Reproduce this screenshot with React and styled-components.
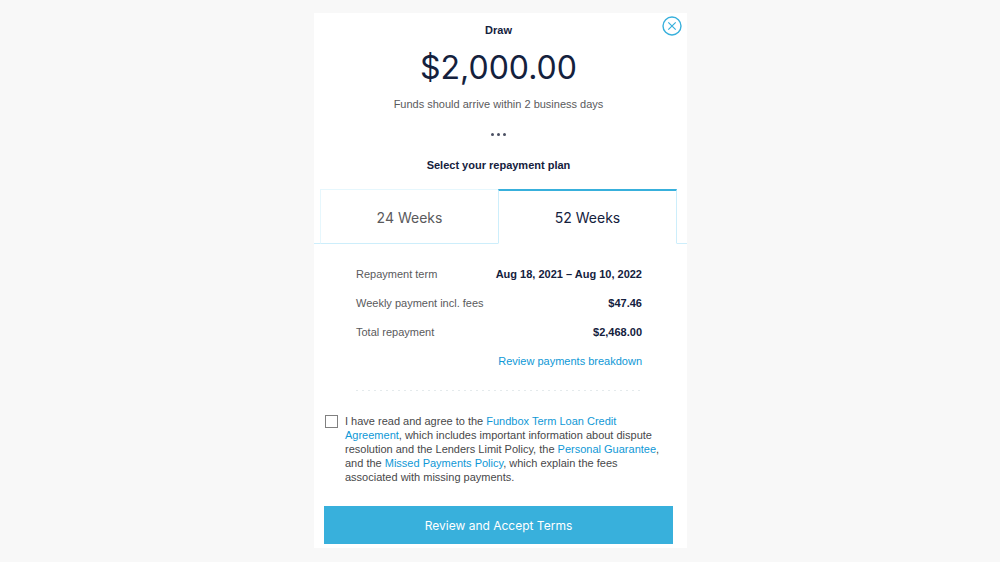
import React, { useState } from "react";
import styled, { createGlobalStyle } from "styled-components";

const color = {
  page: "#f8f8f8",
  navy: "#14213d",
  text: "#5a5a5c",
  darkText: "#48484a",
  link: "#0f98d6",
  accent: "#38b0dc",
  line: "#cdeefb",
  faintLine: "#e6f7fd",
};

const displayFont = `Inter, "Liberation Sans", sans-serif`;

const GlobalStyle = createGlobalStyle`
  *, *::before, *::after { box-sizing: border-box; }
  body {
    margin: 0;
    background: ${color.page};
    color: ${color.text};
    font-family: "Liberation Sans", Arial, sans-serif;
    font-size: 11px;
    line-height: 14px;
  }
  button { font-family: ${displayFont}; cursor: pointer; }
`;

const Page = styled.main`
  display: flex;
  justify-content: center;
  padding: 13px 13px 14px 14px;
`;

const Card = styled.section`
  position: relative;
  width: 100%;
  max-width: 373px;
  background: #fff;
  padding-bottom: 4px;
`;

const CloseButton = styled.button`
  position: absolute;
  top: 3px;
  right: 5px;
  width: 20px;
  height: 20px;
  padding: 0;
  border: 0;
  background: none;
  color: ${color.accent};

  svg { display: block; }
`;

const Header = styled.header`
  display: flex;
  flex-direction: column;
  align-items: center;
  padding: 10px 14px 0 10px;
  text-align: center;
`;

const Heading = styled.h2`
  margin: 0;
  font-size: 11px;
  line-height: 14px;
  font-weight: 700;
  color: ${color.navy};
`;

const Amount = styled.p`
  margin: 10px 0 8px;
  font-family: ${displayFont};
  font-size: 32px;
  line-height: 42px;
  color: ${color.navy};
`;

const Note = styled.p`
  margin: 0;
  color: ${color.text};
`;

const Dots = styled.div`
  display: flex;
  gap: 3px;
  margin: 22px 0;

  span {
    width: 3px;
    height: 3px;
    border-radius: 50%;
    background: #4b5063;
  }
`;

const Tabs = styled.div`
  display: flex;
  margin-top: 17px;

  &::before,
  &::after {
    content: "";
    border-bottom: 1px solid ${color.line};
  }
  &::before { width: 6px; }
  &::after { width: 10px; }
`;

const Tab = styled.button`
  flex: 1;
  height: 55px;
  padding: 2px 0 0;
  font-size: 14px;
  line-height: 18px;
  background: #fff;
  color: ${(p) => (p.$active ? color.navy : color.text)};
  border: 1px solid ${(p) => (p.$active ? color.line : color.faintLine)};
  border-top: ${(p) => (p.$active ? `2px solid ${color.accent}` : `1px solid ${color.faintLine}`)};
  border-right-width: ${(p) => (p.$active ? "1px" : "0")};
  border-bottom-color: ${(p) => (p.$active ? "#fff" : color.line)};
`;

const Details = styled.div`
  margin: 0 45px 0 42px;
  padding: 23px 0 22px;
`;

const DottedRule = styled.hr`
  height: 1px;
  margin: 0 45px 0 42px;
  border: 0;
  background: repeating-linear-gradient(to right, #e4eaec 0 2px, #fff 2px 6px);
`;

const Terms = styled.dl`
  display: flex;
  flex-direction: column;
  gap: 15px;
  margin: 0 0 15px;
`;

const TermRow = styled.div`
  display: flex;
  justify-content: space-between;

  dt, dd { margin: 0; }
  dd {
    font-weight: 700;
    color: ${color.navy};
  }
`;

const LinkLine = styled.div`
  text-align: right;
`;

const Link = styled.a`
  color: ${color.link};
  text-decoration: none;
`;

const Consent = styled.div`
  display: flex;
  align-items: flex-start;
  gap: 7px;
  margin: 23px 18px 0 11px;
  color: ${color.darkText};
`;

const Checkbox = styled.input`
  flex: none;
  appearance: none;
  width: 13px;
  height: 13px;
  margin: 1px 0 0;
  border: 1px solid #808080;
  background: #fff;

  &:checked { background: ${color.accent}; }
`;

const SubmitButton = styled.button`
  display: block;
  width: calc(100% - 24px);
  height: 38px;
  margin: 22px 14px 0 10px;
  padding: 2px 0 0;
  border: 0;
  background: ${color.accent};
  color: #fff;
  font-size: 12px;
  line-height: 18px;
`;

const plans = ["24 Weeks", "52 Weeks"];

const terms = [
  ["Repayment term", "Aug 18, 2021 – Aug 10, 2022"],
  ["Weekly payment incl. fees", "$47.46"],
  ["Total repayment", "$2,468.00"],
];

export default function App() {
  const [plan, setPlan] = useState("52 Weeks");

  return (
    <>
      <GlobalStyle />
      <Page>
        <Card>
          <Header>
            <Heading as="h1">Draw</Heading>
            <Amount>$2,000.00</Amount>
            <Note>Funds should arrive within 2 business days</Note>
            <Dots>
              <span />
              <span />
              <span />
            </Dots>
            <Heading>Select your repayment plan</Heading>
          </Header>
          <CloseButton type="button" aria-label="Close">
            <svg width="20" height="20" viewBox="0 0 20 20" fill="none" stroke="currentColor">
              <circle cx="10" cy="10" r="9" strokeWidth="1.4" />
              <path d="M6.3 6.3l7.4 7.4M13.7 6.3l-7.4 7.4" strokeWidth="1.2" />
            </svg>
          </CloseButton>
          <Tabs role="tablist">
            {plans.map((name) => (
              <Tab
                key={name}
                type="button"
                role="tab"
                aria-selected={plan === name}
                $active={plan === name}
                onClick={() => setPlan(name)}
              >
                {name}
              </Tab>
            ))}
          </Tabs>
          <Details>
            <Terms>
              {terms.map(([label, value]) => (
                <TermRow key={label}>
                  <dt>{label}</dt>
                  <dd>{value}</dd>
                </TermRow>
              ))}
            </Terms>
            <LinkLine>
              <Link href="#breakdown">Review payments breakdown</Link>
            </LinkLine>
          </Details>
          <DottedRule />
          <Consent>
            <Checkbox type="checkbox" id="consent" />
            <label htmlFor="consent">
              I have read and agree to the <Link href="#agreement">Fundbox Term Loan Credit Agreement</Link>,
              which includes important information about dispute resolution and the Lenders Limit
              Policy, the <Link href="#guarantee">Personal Guarantee</Link>, and
              the <Link href="#missed-payments">Missed Payments Policy</Link>, which explain the fees
              associated with missing payments.
            </label>
          </Consent>
          <SubmitButton type="button">Review and Accept Terms</SubmitButton>
        </Card>
      </Page>
    </>
  );
}
